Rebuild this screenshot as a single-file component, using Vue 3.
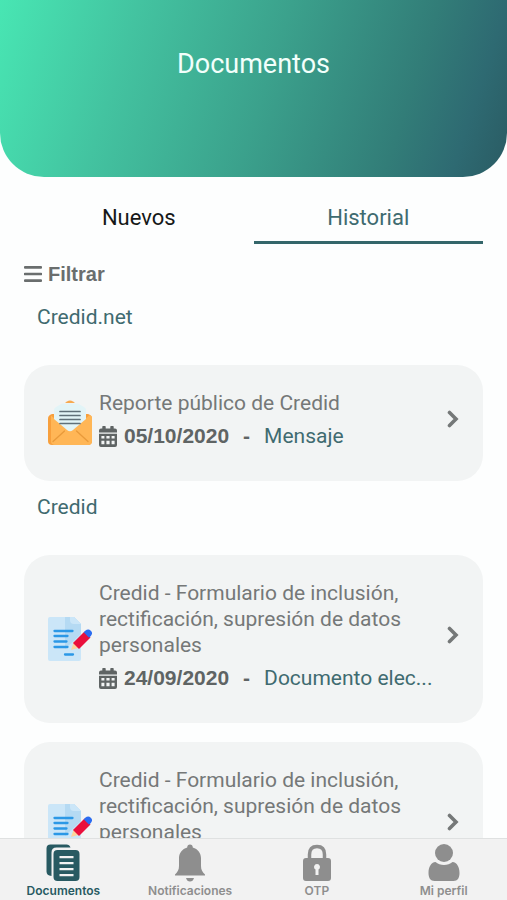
<script setup>
import { ref } from 'vue'

const tabs = ['Nuevos', 'Historial']
const activeTab = ref('Historial')

const groups = [
  {
    name: 'Credid.net',
    items: [
      { icon: 'mail', title: 'Reporte público de Credid', date: '05/10/2020', kind: 'Mensaje' },
    ],
  },
  {
    name: 'Credid',
    items: [
      {
        icon: 'form',
        title: 'Credid - Formulario de inclusión, rectificación, supresión de datos personales',
        date: '24/09/2020',
        kind: 'Documento elec...',
      },
      {
        icon: 'form',
        title: 'Credid - Formulario de inclusión, rectificación, supresión de datos personales',
        date: '24/09/2020',
        kind: 'Documento elec...',
      },
    ],
  },
]

const sections = [
  { id: 'docs', label: 'Documentos' },
  { id: 'bell', label: 'Notificaciones' },
  { id: 'lock', label: 'OTP' },
  { id: 'user', label: 'Mi perfil' },
]
const activeSection = ref('docs')
</script>

<template>
  <div class="screen">
    <main class="content">
      <header class="hero">
        <h1>Documentos</h1>
      </header>

      <div class="tabs" role="tablist">
        <button
          v-for="tab in tabs"
          :key="tab"
          type="button"
          role="tab"
          class="tab"
          :class="{ active: tab === activeTab }"
          :aria-selected="tab === activeTab"
          @click="activeTab = tab"
        >{{ tab }}</button>
      </div>

      <button type="button" class="filter">
        <svg viewBox="0 0 18 18" width="18" height="18" aria-hidden="true">
          <path d="M1 2.400h16M1 9h16M1 15.600h16" stroke="currentColor" stroke-width="2.600" stroke-linecap="round" />
        </svg>
        Filtrar
      </button>

      <section v-for="group in groups" :key="group.name" class="group">
        <h2>{{ group.name }}</h2>
        <a v-for="(item, i) in group.items" :key="i" href="#" class="card">
          <svg v-if="item.icon === 'mail'" class="picture" viewBox="0 0 44 46" aria-hidden="true">
            <path d="M0 19c0-3 1.500-4 4-5h36c2.500 1 4 2 4 5v22q0 4-4 4H4q-4 0-4-4z" fill="#f79f3c" />
            <path d="M17 3l2-1.500q3-2 6 0L27 3z" fill="#f7a94f" />
            <path d="M3 15.500L19 29.500q3 2.600 6 0L41 15.500q3-1 3 2.500v23q0 4-4 4H7q-4 0-4-4z" fill="#ffb656" />
            <path d="M6 10q0-2 2-3l6-3.500h16L36 7q2 1 2 3v9L25 30q-3 2.600-6 0L6 19z" fill="#e2f4f7" />
            <path d="M5 41.500L16.500 31M40 41.500L28.500 31" stroke="#e99a3a" stroke-width="1.300" fill="none" stroke-linecap="round" />
            <path d="M12 11.500h20M12 15.500h20M12 19.500h20M12 23.500h20" stroke="#5f7079" stroke-width="1.700" stroke-linecap="round" />
          </svg>
          <svg v-else class="picture" viewBox="0 0 44 46" aria-hidden="true">
            <path d="M2 1h24l7 7v35q0 2-2 2H2q-2 0-2-2V3q0-2 2-2z" fill="#cbe6f8" />
            <path d="M17 1h9l7 7v10L17 33z" fill="#b5daf3" />
            <path d="M22 1h4l7 7h-7q-4 0-4-4z" fill="#cbe6f8" />
            <path d="M6.500 15h18M6.500 20h13M6.500 25.500h12M6.500 31h13M17 38.500h8" stroke="#2b98e6" stroke-width="2.300" stroke-linecap="round" />
            <path d="M23 34l3-8.500 6 6z" fill="#ffd39c" />
            <path d="M25 27L36.500 15.500l6 6L31 33z" fill="#ea0f3c" />
            <path d="M35.700 16.300l1.600-1.600q3-2.500 5.500 0t0 5.300l-1.700 1.700z" fill="#2a6cf0" />
          </svg>

          <span class="body">
            <span class="title">{{ item.title }}</span>
            <span class="meta">
              <svg class="calendar" viewBox="0 0 18 21" width="18" height="21" aria-hidden="true">
                <path fill-rule="evenodd" fill="currentColor" d="M4 0h2q.7 0 .7.700V2.500h4.600V.700Q11.300 0 12 0h2q.7 0 .7.700V2.500H16q2 0 2 2V6.500H0V4.500q0-2 2-2h1.300V.700Q3.300 0 4 0zM0 7.700h18V19q0 2-2 2H2q-2 0-2-2zM2.400 10v2.600H5.400V10zM7.400 10v2.600h3.200V10zM12.600 10v2.600h3V10zM2.400 14.700v3.500h3v-3.500zM7.400 14.700v3.500h3.200v-3.500zM12.600 14.700v3.500h3v-3.500z" />
              </svg>
              <time>{{ item.date }}</time>
              <b class="dash">-</b>
              <span class="kind">{{ item.kind }}</span>
            </span>
          </span>

          <svg class="chevron" viewBox="0 0 12 18" width="12" height="18" aria-hidden="true">
            <path d="M2.500 2.500L9 9l-6.500 6.500" fill="none" stroke="#757878" stroke-width="3.600" stroke-linecap="round" />
          </svg>
        </a>
      </section>
    </main>

    <nav class="bar">
      <a
        v-for="s in sections"
        :key="s.id"
        href="#"
        class="entry"
        :class="{ active: s.id === activeSection }"
        @click.prevent="activeSection = s.id"
      >
        <svg viewBox="0 0 38 38" width="38" height="38" fill="currentColor" aria-hidden="true">
          <template v-if="s.id === 'docs'">
            <path d="M6.500.500h16q3 0 4 3H12.500q-5 0-5 5V32q-5-.500-5-4.500V4.500q0-4 4-4z" />
            <path fill-rule="evenodd" d="M13.500 6h18q4 0 4 4v23q0 4-4 4h-18q-4 0-4-4V10q0-4 4-4zM15.500 12v2.200h14V12zM15.500 18v2.200h14V18zM15.500 24v2.200h14V24zM15.500 30v2.200h14V30z" />
          </template>
          <template v-else-if="s.id === 'bell'">
            <path d="M19 .500c1.700 0 2.800 1.300 2.800 3 5 1.500 8.200 5.500 8.200 10.500v8c0 4 1.500 6 4 8.500v1H4v-1c2.500-2.500 4-4.500 4-8.500v-8C8 9 11.200 5 16.200 3.500c0-1.700 1.100-3 2.800-3z" />
            <path d="M15 34h8q-1 3.500-4 3.500T15 34z" />
          </template>
          <template v-else-if="s.id === 'lock'">
            <path d="M11.500 15V10.500q0-8 7.500-8t7.500 8V15" fill="none" stroke="currentColor" stroke-width="3.500" />
            <path fill-rule="evenodd" d="M8 14h22q3 0 3 3v17q0 3-3 3H8q-3 0-3-3V17q0-3 3-3zM19 20a3 3 0 0 0-1.500 5.600V31h3v-5.400A3 3 0 0 0 19 20z" />
          </template>
          <template v-else>
            <circle cx="19" cy="9" r="9" />
            <path d="M10.500 18c4.500 4 12.500 4 17 0 4.500.500 7 5 7 11 0 5-2 8-6 8h-19c-4 0-6-3-6-8 0-6 2.500-10.500 7-11z" />
          </template>
        </svg>
        <span>{{ s.label }}</span>
      </a>
    </nav>
  </div>
</template>

<style>
body {
  background: #fdfefe;
}
</style>

<style scoped>
.screen {
  display: flex;
  flex-direction: column;
  height: 100vh;
  font-family: Roboto, "Liberation Sans", sans-serif;
  font-size: 21px;
  color: #757878;
}

.content {
  flex: 1;
  min-height: 0;
  overflow-y: auto;
  scrollbar-width: none;
}

.hero {
  padding: 46px 24px 95px;
  border-radius: 0 0 44px 44px;
  background: linear-gradient(108deg, #48e6b3 0%, #43c3a0 25%, #3ba18c 52%, #327d78 78%, #2e6a72 90%, #2a5b63 100%);
  text-align: center;
}

h1 {
  margin: 0;
  font-size: 27px;
  line-height: 36px;
  font-weight: 400;
  color: #f2fffb;
}

button {
  border: 0;
  background: none;
  font: inherit;
  cursor: pointer;
}

.tabs {
  display: flex;
  padding: 13px 24px 0;
}

.tab {
  flex: 1;
  padding: 14px 0 9px;
  border-bottom: 3px solid transparent;
  font-size: 22px;
  line-height: 28px;
  color: #161818;
}

.tab.active {
  border-color: #34666a;
  color: #3f6b70;
}

.filter {
  display: flex;
  align-items: center;
  gap: 6px;
  padding: 18px 24px 0;
  font-family: "Liberation Sans", Arial, sans-serif;
  font-size: 20px;
  line-height: 24px;
  font-weight: 700;
  color: #6a6e6e;
}

.group {
  display: flex;
  flex-direction: column;
  gap: 19px;
  padding: 0 24px;
}

h2 {
  margin: 0;
  padding: 13px 13px 16px;
  font-size: 21px;
  line-height: 26px;
  font-weight: 400;
  color: #3f6b70;
}

.filter + .group h2 {
  padding-top: 18px;
}

.card {
  display: flex;
  align-items: center;
  padding: 0 24px;
  border-radius: 26px;
  background: #f2f4f4;
  color: inherit;
  text-decoration: none;
}

.picture {
  flex: none;
  width: 44px;
  height: 46px;
}

.body {
  flex: 1;
  min-width: 0;
  display: flex;
  flex-direction: column;
  gap: 7px;
  padding: 25px 12px 32px 7px;
}

.title {
  line-height: 26px;
}

.meta {
  display: flex;
  align-items: center;
  line-height: 26px;
  white-space: nowrap;
  color: #5f6464;
}

.calendar {
  flex: none;
}

time,
.dash {
  font-family: "Liberation Sans", Arial, sans-serif;
  font-weight: 700;
}

time {
  margin-left: 7px;
}

.dash {
  margin: 0 14px;
}

.kind {
  color: #3f6b70;
}

.chevron {
  flex: none;
  margin-bottom: 8px;
}

.bar {
  display: flex;
  padding: 5px 0 1px;
  border-top: 1px solid #dfe1e1;
  background: #f2f2f2;
}

.entry {
  flex: 1;
  display: flex;
  flex-direction: column;
  align-items: center;
  gap: 1px;
  font-family: Inter, "Liberation Sans", sans-serif;
  font-size: 12px;
  line-height: 16px;
  font-weight: 600;
  color: #8e8e8e;
  text-decoration: none;
}

.entry.active {
  color: #285a62;
}
</style>
